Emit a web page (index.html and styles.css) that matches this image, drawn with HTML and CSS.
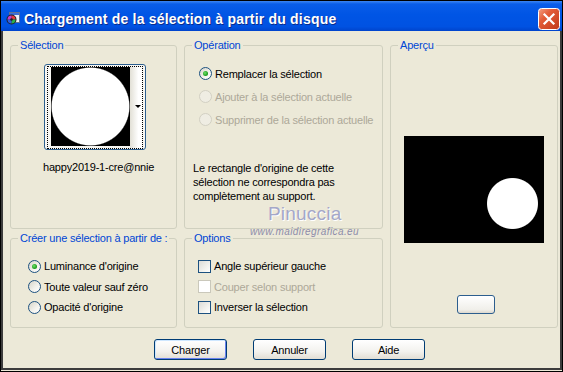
FILE: index.html
```html
<!DOCTYPE html>
<html lang="fr">
<head>
    <meta charset="UTF-8">
    <title>Chargement de la sélection à partir du disque</title>
    <link rel="stylesheet" href="styles.css">
</head>
<body>
    <div class="window">
        <div class="titlebar">
            <svg class="app-icon" width="14" height="13" viewBox="0 0 14 13">
                <rect x="3.5" y="0.5" width="10" height="10" fill="#EEF2F8" stroke="#5E7296"/>
                <rect x="4" y="1" width="9" height="2" fill="#3B6FD6"/>
                <circle cx="5.5" cy="7.5" r="5" fill="#1E1E28"/>
                <path d="M5.5 7.5 L5.5 3.5 A4 4 0 0 1 9.5 7.5 Z" fill="#E23A3A"/>
                <path d="M5.5 7.5 L9.5 7.5 A4 4 0 0 1 5.5 11.5 Z" fill="#2BB34A"/>
                <path d="M5.5 7.5 L5.5 11.5 A4 4 0 0 1 1.5 7.5 Z" fill="#2F5FE0"/>
                <path d="M5.5 7.5 L1.5 7.5 A4 4 0 0 1 5.5 3.5 Z" fill="#C83CC8"/>
                <circle cx="5.5" cy="7.5" r="1.3" fill="#1E1E28"/>
            </svg>
            <span class="title">Chargement de la sélection à partir du disque</span>
            <svg class="close" width="22" height="22" viewBox="0 0 22 22">
                <defs>
                    <linearGradient id="closeGrad" x1="0" y1="0" x2="1" y2="1">
                        <stop offset="0" stop-color="#F4A184"/>
                        <stop offset="0.35" stop-color="#E35D38"/>
                        <stop offset="1" stop-color="#C03818"/>
                    </linearGradient>
                </defs>
                <rect x="0.5" y="0.5" width="21" height="21" rx="3" fill="url(#closeGrad)" stroke="#FFFFFF"/>
                <path d="M6.5 6.5 L15.5 15.5 M15.5 6.5 L6.5 15.5" stroke="#FFFFFF" stroke-width="2.2" stroke-linecap="square"/>
            </svg>
        </div>

        <div class="client">
            <div class="groups">
                <fieldset class="group g-selection">
                    <legend>Sélection</legend>
                    <div class="thumb">
                        <div class="thumb-focus">
                            <div class="thumb-img"></div>
                            <div class="thumb-strip"><span class="arrow"></span></div>
                        </div>
                    </div>
                    <div class="filename">happy2019-1-cre@nnie</div>
                </fieldset>

                <fieldset class="group g-operation">
                    <legend>Opération</legend>
                    <div class="options">
                        <div class="opt"><span class="radio checked"></span><span>Remplacer la sélection</span></div>
                        <div class="opt disabled"><span class="radio"></span><span>Ajouter à la sélection actuelle</span></div>
                        <div class="opt disabled"><span class="radio"></span><span>Supprimer de la sélection actuelle</span></div>
                    </div>
                    <p class="note">Le rectangle d'origine de cette<br>sélection ne correspondra pas<br>complètement au support.</p>
                </fieldset>

                <fieldset class="group g-apercu">
                    <legend>Aperçu</legend>
                    <div class="preview"></div>
                    <div class="mini-btn"></div>
                </fieldset>

                <fieldset class="group g-source">
                    <legend>Créer une sélection à partir de :</legend>
                    <div class="options compact">
                        <div class="opt"><span class="radio checked"></span><span>Luminance d'origine</span></div>
                        <div class="opt"><span class="radio"></span><span>Toute valeur sauf zéro</span></div>
                        <div class="opt"><span class="radio"></span><span>Opacité d'origine</span></div>
                    </div>
                </fieldset>

                <fieldset class="group g-options">
                    <legend>Options</legend>
                    <div class="options compact">
                        <div class="opt"><span class="check"></span><span>Angle supérieur gauche</span></div>
                        <div class="opt disabled"><span class="check"></span><span>Couper selon support</span></div>
                        <div class="opt"><span class="check"></span><span>Inverser la sélection</span></div>
                    </div>
                </fieldset>
            </div>

            <div class="buttons">
                <button class="btn default">Charger</button>
                <button class="btn">Annuler</button>
                <button class="btn">Aide</button>
            </div>
        </div>

        <span class="wm-name">Pinuccia</span>
        <span class="wm-url">www.maidiregrafica.eu</span>
    </div>
</body>
</html>
```

FILE: styles.css
```css
* { box-sizing: border-box; }
body { margin: 0; font-family: "Liberation Sans", Arial, sans-serif; font-size: 11px; letter-spacing: -0.2px; color: #000; background: #fff; }

.window { position: relative; width: 563px; height: 372px; border: 1px solid #000; padding-bottom: 1px; display: flex; flex-direction: column; background: #ECE9D8; }

/* barre de titre */
.titlebar { height: 30px; flex: none; display: flex; align-items: center; padding: 5px 2px 0 5px; color: #fff; background: linear-gradient(to bottom, #3D86F2 0, #0A5DE8 3px, #0055E5 45%, #0052E2 85%, #0044CC 100%); }
.app-icon { flex: none; }
.title { flex: 1; margin-left: 4px; font-weight: bold; font-size: 14px; letter-spacing: 0.2px; text-shadow: 1px 1px 0 #0B2C8C; white-space: nowrap; }
.close { flex: none; }

.client { flex: 1; border: 2px solid #3C3C3C; border-top: 0; padding: 8px 2px 0 7px; }

/* groupes */
.groups { display: grid; grid-template-columns: 167px 199px 168px; grid-template-rows: 190px 96px; column-gap: 7px; row-gap: 3px; }
.group { margin: 0; padding: 0; min-width: 0; border: 1px solid #D0D0BF; border-radius: 3px; }
.group legend { margin-left: 7px; padding: 0 2px; line-height: 13px; color: #0046D5; }
.g-apercu { grid-column: 3; grid-row: 1 / 3; }
.g-source { grid-column: 1; grid-row: 2; }
.g-options { grid-column: 2; grid-row: 2; }

/* sélection */
.thumb { width: 102px; height: 86px; margin: 12px 0 0 33px; padding: 1px 2px 0 2px; display: flex; border: 1px solid #2C5E8E; border-radius: 3px; background: #F7F6F2; }
.thumb-focus { flex: 1; display: flex; padding-left: 3px; border: 1px dotted #000; }
.thumb-img { width: 79px; height: 79px; background: radial-gradient(circle closest-side, #fff 97%, #000 100%); }
.thumb-strip { flex: 1; display: flex; align-items: center; justify-content: flex-end; padding: 0 1px 2px 0; background: linear-gradient(to right, #E2E0D6, #fff 70%); }
.arrow { width: 0; height: 0; border-left: 3px solid transparent; border-right: 3px solid transparent; border-top: 3px solid #000; }
.filename { margin-top: 11px; padding-left: 32px; line-height: 13px; }

/* boutons radio et cases */
.options { padding: 10px 0 0 14px; }
.options.compact { padding: 11px 0 0 17px; }
.g-options .options.compact { padding-left: 13px; }
.opt { display: flex; align-items: center; gap: 3px; height: 23px; white-space: nowrap; }
.compact .opt { height: 20.5px; }
.opt.disabled { color: #ACA899; }

.radio { position: relative; flex: none; width: 13px; height: 13px; border: 1px solid #1C5180; border-radius: 50%; background: linear-gradient(135deg, #D6D4C8 0%, #F4F3EE 60%, #fff 100%); }
.radio.checked::after { content: ""; position: absolute; left: 3px; top: 3px; width: 5px; height: 5px; border-radius: 50%; background: radial-gradient(circle at 40% 40%, #6EE06A, #21A121 60%, #178617); }
.disabled .radio { border-color: #D2D0C3; background: #EFEDE3; }

.check { flex: none; width: 13px; height: 13px; border: 1px solid #1C5180; background: linear-gradient(135deg, #DCDCD7 0%, #F2F2EE 60%, #fff 100%); }
.disabled .check { border-color: #CAC8BB; background: #fff; }

.note { margin: 30px 0 0 8px; line-height: 14px; }

/* aperçu */
.preview { width: 140px; height: 107px; margin: 84px 0 0 13px; background: radial-gradient(circle 26px at 108.5px 67.5px, #fff 96%, #000 100%); }
.mini-btn { width: 38px; height: 19px; margin: 52px 0 0 66px; border: 1px solid #2C5E8E; border-radius: 3px; background: linear-gradient(#fff, #F0EFEA 80%, #DDD8CE); }

/* boutons du bas */
.buttons { display: flex; gap: 26px; margin: 11px 0 0 144px; }
.btn { width: 73px; height: 21px; padding: 0; font-family: inherit; font-size: 11px; letter-spacing: -0.2px; color: #000; border: 1px solid #003C74; border-radius: 3px; background: linear-gradient(#fff 0%, #F3F2EE 60%, #E2DED4 100%); }
.btn.default { box-shadow: inset 1px 1px 0 #CEE7FF, inset -1px -1px 0 #6982EE; }

/* filigrane */
.wm-name { position: absolute; left: 267px; top: 202px; font-size: 19px; letter-spacing: 0.2px; color: #A4A7C8; text-shadow: 1px 1px 0 #fff; pointer-events: none; }
.wm-url { position: absolute; left: 249px; top: 225px; font-size: 10px; font-style: italic; letter-spacing: 0.4px; color: #8C8CAA; pointer-events: none; }
```
